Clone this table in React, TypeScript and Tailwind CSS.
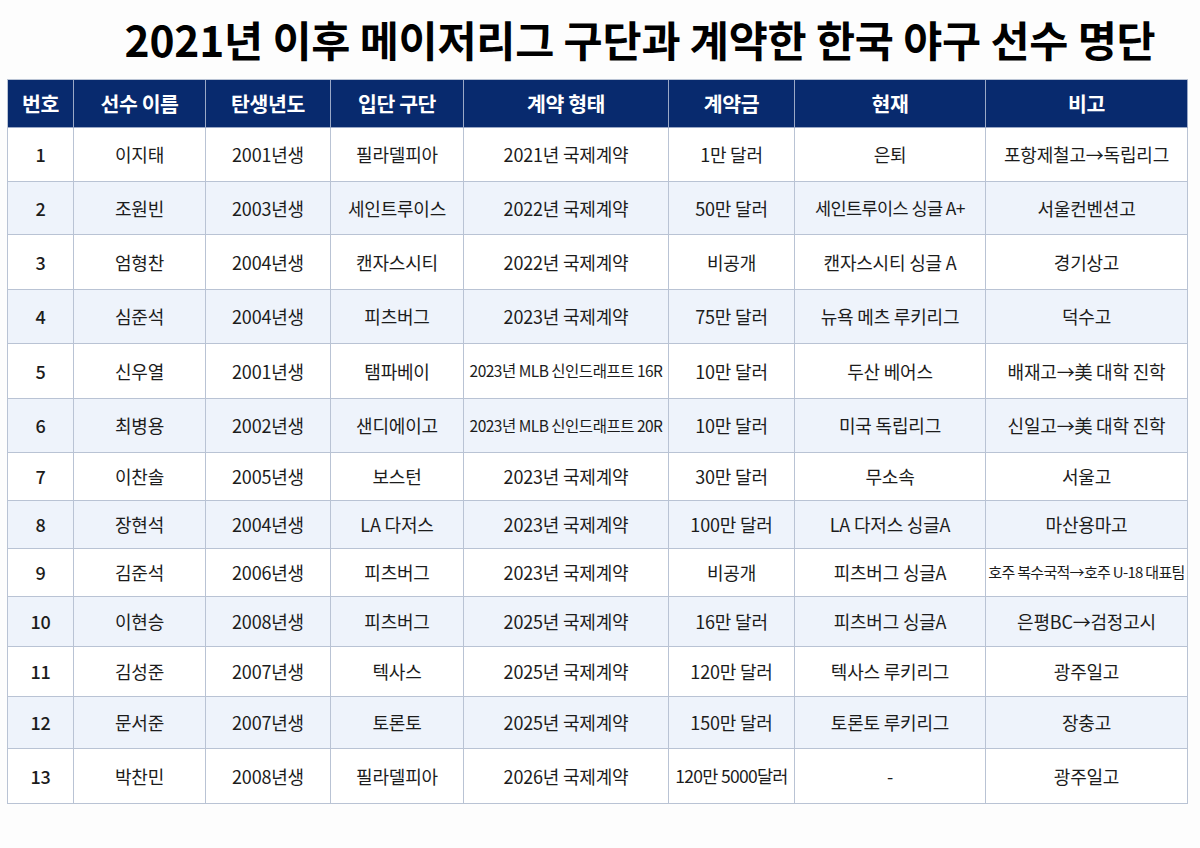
import React from "react";

const rows: { h: string; c: string[] }[] = [
  { h: "h-[54px]", c: ["1", "이지태", "2001년생", "필라델피아", "2021년 국제계약", "1만 달러", "은퇴", "포항제철고→독립리그"] },
  { h: "h-[53px]", c: ["2", "조원빈", "2003년생", "세인트루이스", "2022년 국제계약", "50만 달러", "세인트루이스 싱글 A+", "서울컨벤션고"] },
  { h: "h-[55px]", c: ["3", "엄형찬", "2004년생", "캔자스시티", "2022년 국제계약", "비공개", "캔자스시티 싱글 A", "경기상고"] },
  { h: "h-[54px]", c: ["4", "심준석", "2004년생", "피츠버그", "2023년 국제계약", "75만 달러", "뉴욕 메츠 루키리그", "덕수고"] },
  { h: "h-[55px]", c: ["5", "신우열", "2001년생", "탬파베이", "2023년 MLB 신인드래프트 16R", "10만 달러", "두산 베어스", "배재고→美 대학 진학"] },
  { h: "h-[54px]", c: ["6", "최병용", "2002년생", "샌디에이고", "2023년 MLB 신인드래프트 20R", "10만 달러", "미국 독립리그", "신일고→美 대학 진학"] },
  { h: "h-[48px]", c: ["7", "이찬솔", "2005년생", "보스턴", "2023년 국제계약", "30만 달러", "무소속", "서울고"] },
  { h: "h-[48px]", c: ["8", "장현석", "2004년생", "LA 다저스", "2023년 국제계약", "100만 달러", "LA 다저스 싱글A", "마산용마고"] },
  { h: "h-[48px]", c: ["9", "김준석", "2006년생", "피츠버그", "2023년 국제계약", "비공개", "피츠버그 싱글A", "호주 복수국적→호주 U-18 대표팀"] },
  { h: "h-[50px]", c: ["10", "이현승", "2008년생", "피츠버그", "2025년 국제계약", "16만 달러", "피츠버그 싱글A", "은평BC→검정고시"] },
  { h: "h-[50px]", c: ["11", "김성준", "2007년생", "텍사스", "2025년 국제계약", "120만 달러", "텍사스 루키리그", "광주일고"] },
  { h: "h-[52px]", c: ["12", "문서준", "2007년생", "토론토", "2025년 국제계약", "150만 달러", "토론토 루키리그", "장충고"] },
  { h: "h-[55px]", c: ["13", "박찬민", "2008년생", "필라델피아", "2026년 국제계약", "120만 5000달러", "-", "광주일고"] },
];

const headers = ["번호", "선수 이름", "탄생년도", "입단 구단", "계약 형태", "계약금", "현재", "비고"];

const grid = "grid grid-cols-[66px_132px_125px_133px_205px_126px_191px_202px]";
const font = { fontFamily: '"Noto Sans CJK KR", "Noto Sans", sans-serif' };

function cellClass(text: string, col: number) {
  if (col === 4 && text.includes("MLB")) return "text-[15.5px] tracking-[-0.5px]";
  if (col === 7 && text.length > 14) return "text-[15px] tracking-[-0.7px]";
  if (col === 5 && text.length > 8) return "text-[17.5px] tracking-[-0.7px]";
  if (col === 6 && text.length > 10) return "text-[17.5px] tracking-[-0.6px]";
  return "text-[18px] tracking-[-0.2px]";
}

export default function App() {
  return (
    <div className="w-[1200px] h-[848px] bg-[#fdfdfd] text-[#1c1c1c]" style={font}>
      <div className="h-[79px] flex items-center justify-center pl-[80px] pb-[2px]">
        <h1 className="text-[42.5px] font-bold tracking-[-0.2px] text-black">
          2021년 이후 메이저리그 구단과 계약한 한국 야구 선수 명단
        </h1>
      </div>
      <div className="ml-[7px] w-[1181px] border-l border-t border-[#b9c3d4]">
        <div className={`${grid} h-[48px] bg-[#082a6e]`}>
          {headers.map((h, i) => (
            <div
              key={i}
              className="flex items-center justify-center border-r border-b border-[#9aa8c6] text-white font-bold text-[20.5px] tracking-[-0.4px]"
            >
              {h}
            </div>
          ))}
        </div>
        {rows.map((r, ri) => (
          <div key={ri} className={`${grid} ${r.h} ${ri % 2 === 1 ? "bg-[#eef3fb]" : "bg-white"}`}>
            {r.c.map((t, ci) => (
              <div
                key={ci}
                className={`flex items-center justify-center whitespace-nowrap border-r border-b border-[#b9c3d4] ${cellClass(t, ci)} ${ci === 0 ? "font-medium" : ""}`}
              >
                {t}
              </div>
            ))}
          </div>
        ))}
      </div>
    </div>
  );
}
